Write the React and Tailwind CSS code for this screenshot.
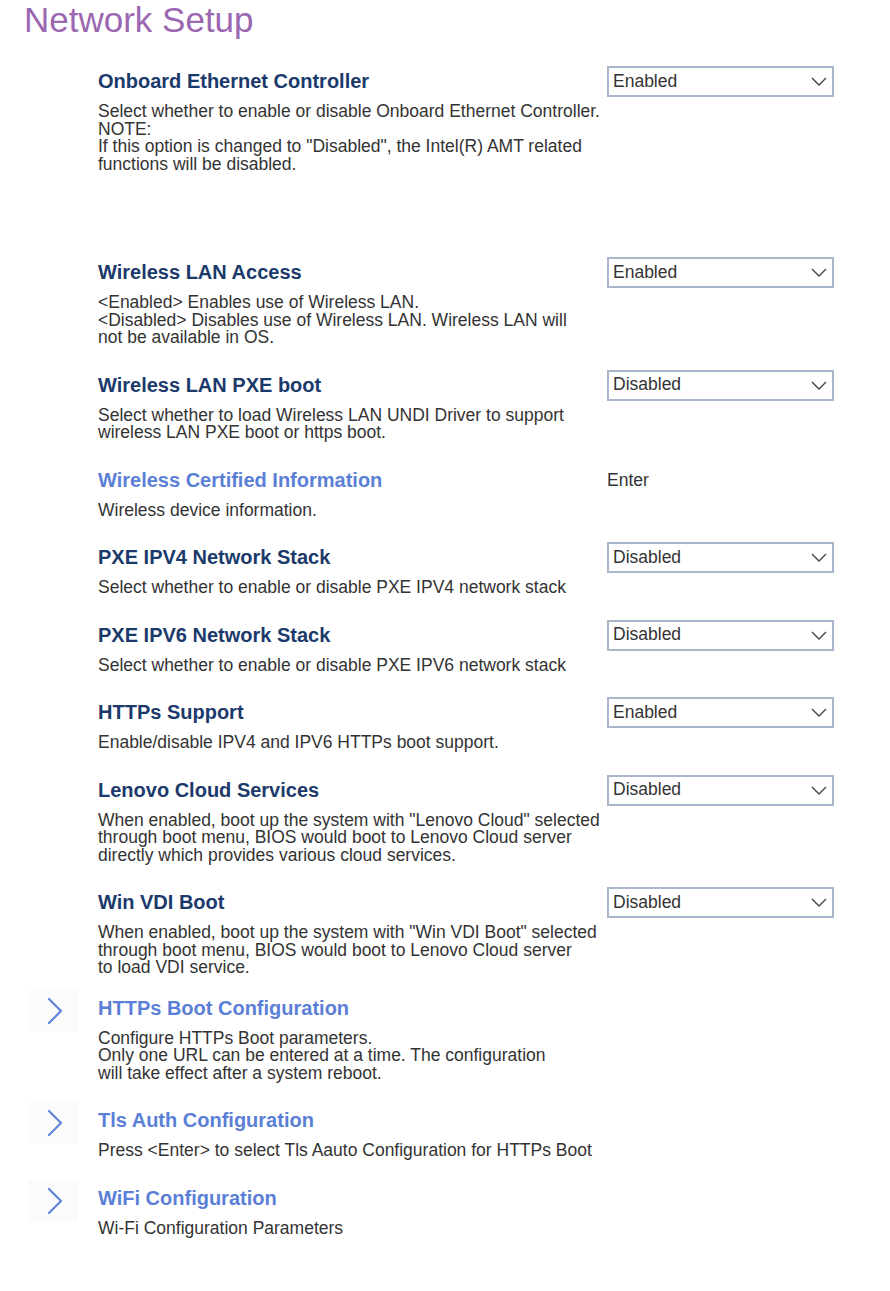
import React from 'react';

const items = [
  {
    label: 'Onboard Ethernet Controller',
    value: 'Enabled',
    desc: [
      'Select whether to enable or disable Onboard Ethernet Controller.',
      'NOTE:',
      'If this option is changed to "Disabled", the Intel(R) AMT related',
      'functions will be disabled.',
    ],
  },
  {
    label: 'Wireless LAN Access',
    value: 'Enabled',
    gap: 'mt-[87px]',
    desc: [
      '<Enabled> Enables use of Wireless LAN.',
      '<Disabled> Disables use of Wireless LAN. Wireless LAN will',
      'not be available in OS.',
    ],
  },
  {
    label: 'Wireless LAN PXE boot',
    value: 'Disabled',
    desc: [
      'Select whether to load Wireless LAN UNDI Driver to support',
      'wireless LAN PXE boot or https boot.',
    ],
  },
  {
    label: 'Wireless Certified Information',
    link: true,
    enter: true,
    desc: ['Wireless device information.'],
  },
  {
    label: 'PXE IPV4 Network Stack',
    value: 'Disabled',
    desc: ['Select whether to enable or disable PXE IPV4 network stack'],
  },
  {
    label: 'PXE IPV6 Network Stack',
    value: 'Disabled',
    desc: ['Select whether to enable or disable PXE IPV6 network stack'],
  },
  {
    label: 'HTTPs Support',
    value: 'Enabled',
    desc: ['Enable/disable IPV4 and IPV6 HTTPs boot support.'],
  },
  {
    label: 'Lenovo Cloud Services',
    value: 'Disabled',
    desc: [
      'When enabled, boot up the system with "Lenovo Cloud" selected',
      'through boot menu, BIOS would boot to Lenovo Cloud server',
      'directly which provides various cloud services.',
    ],
  },
  {
    label: 'Win VDI Boot',
    value: 'Disabled',
    desc: [
      'When enabled, boot up the system with "Win VDI Boot" selected',
      'through boot menu, BIOS would boot to Lenovo Cloud server',
      'to load VDI service.',
    ],
  },
  {
    label: 'HTTPs Boot Configuration',
    link: true,
    submenu: true,
    gap: 'mt-[19px]',
    desc: [
      'Configure HTTPs Boot parameters.',
      'Only one URL can be entered at a time. The configuration',
      'will take effect after a system reboot.',
    ],
  },
  {
    label: 'Tls Auth Configuration',
    link: true,
    submenu: true,
    desc: ['Press <Enter> to select Tls Aauto Configuration for HTTPs Boot'],
  },
  {
    label: 'WiFi Configuration',
    link: true,
    submenu: true,
    desc: ['Wi-Fi Configuration Parameters'],
  },
];

const ChevronRight = () => (
  <svg width="16" height="28" viewBox="0 0 16 28" fill="none">
    <path d="M2 2 L14 14 L2 26" stroke="#5f84da" strokeWidth="2.2" strokeLinecap="round" strokeLinejoin="round" />
  </svg>
);

const ChevronDown = () => (
  <svg width="16" height="9" viewBox="0 0 16 9" fill="none">
    <path d="M1 1 L8 8 L15 1" stroke="#444" strokeWidth="1.4" />
  </svg>
);

const Dropdown = ({ value }) => (
  <div className="-mt-[3px] flex h-[31px] w-[227px] items-center justify-between border-2 border-[#aab6c9] bg-white pl-[4px] pr-[5px]">
    <span className="text-[17.5px] leading-none text-[#333]">{value}</span>
    <ChevronDown />
  </div>
);

const Row = ({ item, first }) => (
  <div className={`flex items-start ${first ? '' : item.gap || 'mt-[26px]'}`}>
    <div className="w-[74px] shrink-0">
      {item.submenu && (
        <div className="-mt-[6px] ml-[4px] flex h-[42px] w-[50px] items-center justify-center bg-[#fbfbfb] pl-[4px]">
          <ChevronRight />
        </div>
      )}
    </div>
    <div className="w-[509px] shrink-0">
      <div
        className={`h-[24px] whitespace-nowrap text-[20px] font-bold leading-[24px] ${
          item.link ? 'text-[#5b7fd6]' : 'text-[#1b3a6b]'
        }`}
      >
        {item.label}
      </div>
      <div className="mt-[10px] whitespace-nowrap text-[17.5px] leading-[17.5px] text-[#333]">
        {item.desc.map((line, idx) => (
          <div key={idx}>{line}</div>
        ))}
      </div>
    </div>
    <div>
      {item.value && <Dropdown value={item.value} />}
      {item.enter && <div className="text-[17.5px] leading-[24px] text-[#333]">Enter</div>}
    </div>
  </div>
);

export default function App() {
  return (
    <div className="min-h-[1291px] w-[890px] bg-white pl-6 font-['Liberation_Sans',Arial,sans-serif]">
      <h1 className="h-[40px] text-[35px] font-normal leading-[40px] text-[#9b67b1]">Network Setup</h1>
      <div className="mt-[29px]">
        {items.map((item, idx) => (
          <Row key={idx} item={item} first={idx === 0} />
        ))}
      </div>
    </div>
  );
}
